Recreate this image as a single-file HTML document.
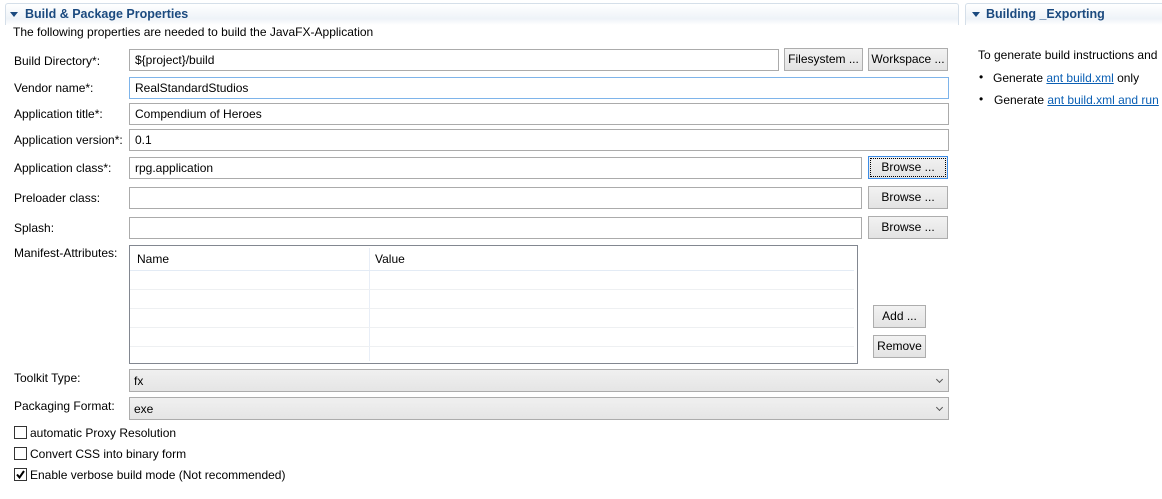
<!DOCTYPE html>
<html><head><style>
*{box-sizing:border-box;margin:0;padding:0}
body{width:1162px;height:499px;background:#fff;font-family:"Liberation Sans",sans-serif;font-size:12px;color:#000;position:relative;overflow:hidden}
.a{position:absolute;white-space:nowrap}
.hdr{position:absolute;top:3px;height:22px;border:1px solid #d5dfe9;border-bottom:none;border-radius:3px 3px 0 0;background:linear-gradient(#fff,#eef3f8 70%,#fff)}
.ht{position:absolute;top:7px;font-weight:bold;color:#1b4a7f;font-size:12.5px}
.tri{position:absolute;top:12px;width:0;height:0;border-left:4px solid transparent;border-right:4px solid transparent;border-top:5px solid #1b4a7f}
.in{position:absolute;height:22px;border:1px solid #ababab;background:#fff;padding:3px 5px;white-space:nowrap}
.btn{position:absolute;height:23px;border:1px solid #adadad;background:linear-gradient(#f2f2f2,#e3e3e3);text-align:center;line-height:21px}
.cb{position:absolute;width:13px;height:13px;border:1px solid #333;background:#fff;left:14px}
.cmb{position:absolute;left:129px;width:820px;height:23px;border:1px solid #acacac;background:linear-gradient(#f0f0f0,#e5e5e5);padding:4px 4px}
.cmb:after{content:"";position:absolute;right:6px;top:7px;width:4px;height:4px;border-right:1.5px solid #555;border-bottom:1.5px solid #555;transform:rotate(45deg)}
a{color:#0a5fb4;text-decoration:underline}
</style></head><body>
<div class="hdr" style="left:5px;width:954px"></div>
<div class="tri" style="left:10px"></div>
<div class="ht" style="left:25px">Build &amp; Package Properties</div>
<div class="hdr" style="left:965px;width:200px"></div>
<div class="tri" style="left:972px"></div>
<div class="ht" style="left:986px">Building _Exporting</div>
<div class="a" style="left:13px;top:25px">The following properties are needed to build the JavaFX-Application</div>

<div class="a" style="left:14px;top:54px">Build Directory*:</div>
<div class="in" style="left:129px;top:49px;width:650px">${project}/build</div>
<div class="btn" style="left:784px;top:48px;width:79px">Filesystem ...</div>
<div class="btn" style="left:868px;top:48px;width:80px">Workspace ...</div>

<div class="a" style="left:14px;top:81px">Vendor name*:</div>
<div class="in" style="left:129px;top:77px;width:820px;border-color:#7eb4ea">RealStandardStudios</div>
<div class="a" style="left:14px;top:107px">Application title*:</div>
<div class="in" style="left:129px;top:103px;width:820px">Compendium of Heroes</div>
<div class="a" style="left:14px;top:133px">Application version*:</div>
<div class="in" style="left:129px;top:129px;width:820px">0.1</div>
<div class="a" style="left:14px;top:161px">Application class*:</div>
<div class="in" style="left:129px;top:157px;width:733px">rpg.application</div>
<div class="btn" style="left:868px;top:156px;width:80px;border:1px solid #3c8ce6;outline:1px dotted #000;outline-offset:-3px">Browse ...</div>
<div class="a" style="left:14px;top:191px">Preloader class:</div>
<div class="in" style="left:129px;top:187px;width:733px"></div>
<div class="btn" style="left:868px;top:186px;width:80px">Browse ...</div>
<div class="a" style="left:14px;top:221px">Splash:</div>
<div class="in" style="left:129px;top:217px;width:733px"></div>
<div class="btn" style="left:868px;top:216px;width:80px">Browse ...</div>

<div class="a" style="left:14px;top:246px">Manifest-Attributes:</div>
<div class="a" style="left:129px;top:245px;width:729px;height:119px;border:1px solid #828790;background:#fff">
 <div class="a" style="left:7px;top:6px">Name</div>
 <div class="a" style="left:245px;top:6px">Value</div>
 <div class="a" style="left:239px;top:2px;width:1px;height:113px;background:#e8eef7"></div>
 <div class="a" style="left:0;top:24px;width:724px;height:1px;background:#e3ebf5"></div>
 <div class="a" style="left:0;top:43px;width:724px;height:1px;background:#eef0f2"></div>
 <div class="a" style="left:0;top:62px;width:724px;height:1px;background:#eef0f2"></div>
 <div class="a" style="left:0;top:81px;width:724px;height:1px;background:#eef0f2"></div>
 <div class="a" style="left:0;top:100px;width:724px;height:1px;background:#eef0f2"></div>
</div>
<div class="btn" style="left:873px;top:305px;width:53px">Add ...</div>
<div class="btn" style="left:873px;top:335px;width:53px">Remove</div>

<div class="a" style="left:14px;top:371px">Toolkit Type:</div>
<div class="cmb" style="top:369px">fx</div>
<div class="a" style="left:14px;top:399px">Packaging Format:</div>
<div class="cmb" style="top:397px">exe</div>

<div class="cb" style="top:426px"></div><div class="a" style="left:30px;top:426px">automatic Proxy Resolution</div>
<div class="cb" style="top:447px"></div><div class="a" style="left:30px;top:447px">Convert CSS into binary form</div>
<div class="cb" style="top:468px"><svg width="11" height="11" style="position:absolute;left:0;top:0"><path d="M2 5.5L4.5 8.5L9 2" stroke="#000" stroke-width="2" fill="none"/></svg></div><div class="a" style="left:30px;top:468px">Enable verbose build mode (Not recommended)</div>

<div class="a" style="left:978px;top:48px">To generate build instructions and</div>
<div class="a" style="left:979px;top:70px">•</div>
<div class="a" style="left:993px;top:71px">Generate <a>ant build.xml</a> only</div>
<div class="a" style="left:979px;top:92px">•</div>
<div class="a" style="left:994px;top:93px">Generate <a>ant build.xml and run</a></div>
</body></html>
